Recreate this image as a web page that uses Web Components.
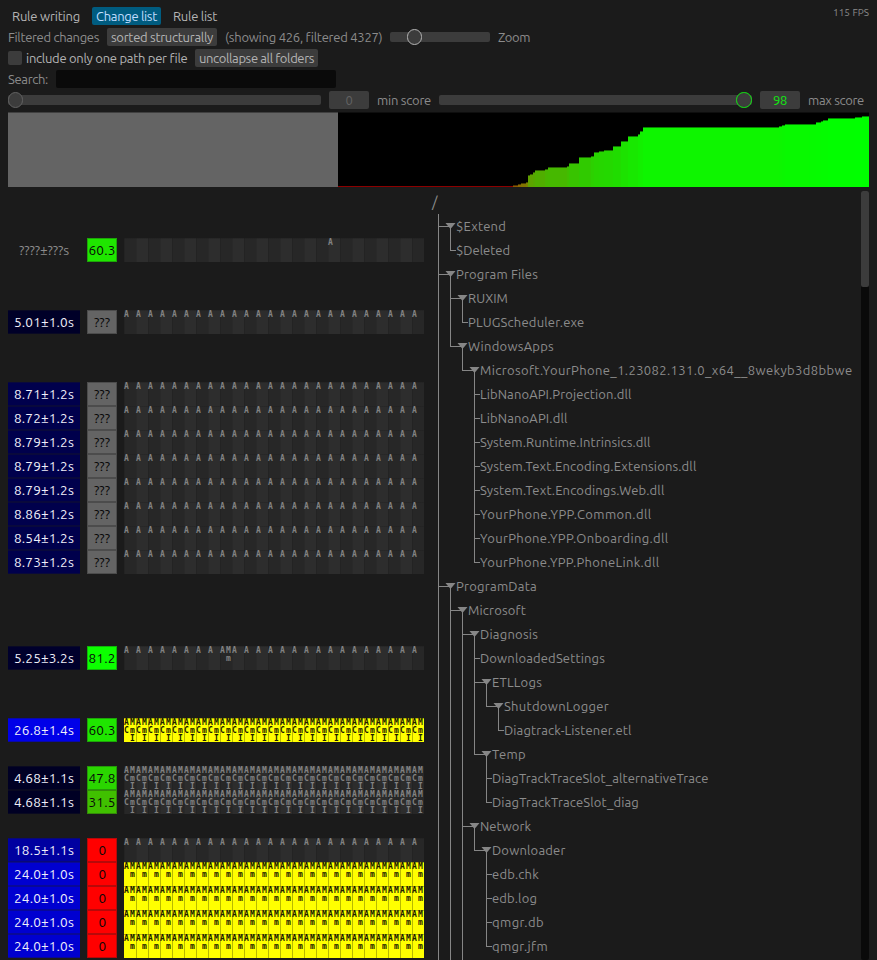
<!DOCTYPE html>
<html lang="en"><head><meta charset="utf-8"><title>Change list</title>
<style>
html,body{margin:0;height:960px;overflow:hidden;background:#1b1b1b}
body{font:13px/18px Ubuntu,"Noto Sans",sans-serif;color:#8c8c8c}
</style></head><body><change-app></change-app>
<script>
const define=(name,cls)=>customElements.define(name,cls);
const root=(el,html)=>{const r=el.shadowRoot||el.attachShadow({mode:'open'});r.innerHTML=html;return r};

/* Text whose tracking is adjusted to occupy a given advance width. */
define('fit-text',class extends HTMLElement{
  connectedCallback(){
    const r=root(this,`<style>:host{display:block;white-space:pre;flex:none}span{display:inline-block}</style><span><slot></slot></span>`);
    const w=+this.getAttribute('w');this.style.width=w+'px';
    const s=r.querySelector('span'),n=this.textContent.length;
    if(n)s.style.letterSpacing=((w-s.getBoundingClientRect().width)/n)+'px';
  }
});
define('ui-button',class extends HTMLElement{
  connectedCallback(){root(this,`<style>:host{display:flex;align-items:center;justify-content:center;box-sizing:border-box;height:18px;border-radius:2px;background:#3c3c3c;color:#b4b4b4;flex:none}
  :host([kind=plain]){background:none}:host([kind=selected]){background:#005c80;color:#c0deff}:host([kind=value]){width:40px;color:#626262}:host([kind=max]){width:40px;color:#12e812}</style><slot></slot>`)}
});
define('ui-slider',class extends HTMLElement{
  connectedCallback(){root(this,`<style>:host{display:flex;align-items:center;flex:none;height:18px;width:${this.getAttribute('w')}px}
  .rail{height:10px;width:100%;border-radius:2px;background:#3c3c3c;display:flex;align-items:center}
  .knob{box-sizing:border-box;width:15.5px;height:15.5px;flex:none;border-radius:50%;background:#3c3c3c;border:1px solid ${this.getAttribute('c')};margin-left:${this.getAttribute('at')}px}</style><div class="rail"><div class="knob"></div></div>`)}
});
define('ui-check',class extends HTMLElement{
  connectedCallback(){root(this,`<style>:host{display:block;width:14px;height:14px;border-radius:2px;background:#3c3c3c;flex:none}</style>`)}
});
define('score-histogram',class extends HTMLElement{
  connectedCallback(){
    const steps=[[338,186,'#8c0000'],[513,185,'#8c5a00'],[518,184,'#8a6800'],[521,183,'#827400'],[526,182,'#7a8000'],[528,175,'#60a000'],[530,174,'#5ca400'],[533,172,'#56a800'],[535,170,'#50ae00'],[545,169,'#48b600'],[548,167,'#46b800'],[567,166,'#40be00'],[569,163,'#38c400'],[579,157,'#30ca00'],[591,156,'#2cd000'],[594,152,'#28d400'],[599,151,'#26d600'],[604,150,'#24d800'],[613,146,'#20dc00'],[621,141,'#1ce200'],[628,136,'#18e800'],[638,134,'#14ee00'],[640,131,'#12f000'],[643,127,'#0ef500'],[779,126,'#0cf600'],[782,125,'#0af700'],[785,124,'#08f900'],[809,124,'#06fa00'],[816,122,'#05fb00'],[821,121,'#04fc00'],[823,120,'#04fc00'],[828,118,'#02fe00'],[855,117,'#01ff00'],[862,116,'#00ff00'],[869]];
    let b='';for(let i=0;i<steps.length-1;i++){const [x,y,c]=steps[i],w=steps[i+1][0]-x;b+=`<rect x="${x-8}" y="${y-112}" width="${w}" height="${187-y}" fill="${c}"/>`+(y<186?`<rect x="${x-8}" y="${y-112}" width="${w}" height="1" fill="#000" opacity=".45"/>`:'')}
    root(this,`<style>:host{display:block;width:861px;height:75px}svg{display:block}</style><svg width="861" height="75" shape-rendering="crispEdges"><rect width="861" height="75" fill="#000"/><rect width="330" height="75" fill="#646464"/><rect width="861" height="1" fill="#1b1b1b" opacity=".5"/>${b}</svg>`)
  }
});

/* Stats shown beside a path: duration, score, and the per-run event marks. */
define('change-stats',class extends HTMLElement{
  connectedCallback(){
    const d=this.data;if(!d){root(this,'<style>:host{display:block;height:24px}</style>');return}
    const [time,tc,score,sc,kind]=d,yellow=kind==='full'&&tc!=='#000024'||kind==='am';
    const rep=s=>s.repeat(25);
    const lines={a:[rep('A ')],one:[' '.repeat(34)+'A'],mix:['A '.repeat(8)+'AM'+'A '.repeat(16),' '.repeat(17)+'m'],full:[rep('AM'),rep('Cm'),rep(' I')],am:[rep('AM'),rep(' m')]}[kind];
    const tw=time[0]==='?'?50:60,sw=score==='0'?7:score==='???'?16:27;
    root(this,`<style>:host{display:flex;gap:8px;height:24px}
    .t,.s{height:24px;box-sizing:border-box;display:flex;align-items:center;justify-content:center;border:solid rgba(27,27,27,.32);border-width:1px 0}
    .t{width:72px;background:${tc};color:${tc==='transparent'?'#8c8c8c':'#f0f0fa'};${tc==='transparent'?'border:0':''}}
    .s{width:30px;background:${sc};color:#080808;border-width:1px;margin:0 -1px}
    fit-text{font-size:13.6px;line-height:19px}
    .m{width:300px;height:24px;font:bold 8px/8px "DejaVu Sans Mono",monospace;letter-spacing:1.184px;white-space:pre;color:${yellow?'#1c1c00':'#828282'};
    background:linear-gradient(rgba(27,27,27,.3) 1px,transparent 1px),${yellow?'linear-gradient(#ff0,#ff0) 0 0/1px 24px no-repeat,repeating-linear-gradient(90deg,#b9b900 0 1px,#ffff00 1px 12px)':'repeating-linear-gradient(90deg,#232323 0 1px,#272727 1px 12px,#292929 12px 13px,#2d2d2d 13px 24px)'};padding-top:1px;box-sizing:border-box}</style>
    <div class="t"><fit-text w="${tw}">${time}</fit-text></div><div class="s"><fit-text w="${sw}">${score}</fit-text></div><div class="m">${lines.map(l=>`<div>${l}</div>`).join('')}</div>`)
  }
});

/* One tree row: ancestor guides, connector, optional fold arrow, label. */
define('tree-row',class extends HTMLElement{
  connectedCallback(){
    const {depth:p,folder,label,w,open,last}=this.data;
    let g='';
    const line=(x,y,w,h)=>`<rect x="${x}" y="${y}" width="${w}" height="${h}"/>`;
    for(let c=0;c<p;c++)if(open[c])g+=line(12*c,0,1,24);
    g+=line(12*p,0,1,last?13:24);
    g+=line(12*p,12,folder?12:6,1);
    if(folder)g+=line(12*p+12,13,1,11)+`<path shape-rendering="auto" d="M${12*p+7.5} 9h10l-5 6z"/>`;
    const gw=12*p+(folder?18:6);
    root(this,`<style>:host{display:flex;height:24px;align-items:center}svg{flex:none;fill:#868686}</style><svg width="${gw}" height="24" shape-rendering="crispEdges">${g}</svg><fit-text w="${w}">${label}</fit-text>`)
  }
});
define('change-app',class extends HTMLElement{
  connectedCallback(){
    const r=root(this,`<style>:host{display:block;width:877px;height:960px;overflow:hidden}
    header{padding:7px 8px 0;display:flex;flex-direction:column;gap:3px}
    .row{display:flex;height:18px;align-items:center}
    .fps{margin-left:auto;font-size:10px;line-height:12px;margin-top:-6px}
    .box{width:280px;height:18px;background:#0a0a0a;border-radius:2px}
    .light{color:#b4b4b4}
    score-histogram{margin:3px 8px 3px}
    main{display:flex;padding:0 8px;height:770px;overflow:hidden}
    .stats{width:416px;padding-top:24px;flex:none}
    .tree{width:431px;margin-left:14px;flex:none}
    .root{height:24px;display:flex;align-items:center;margin-left:-6px}
    .root fit-text{font-size:15px}
    .bar{width:8px;margin-left:-8px;height:769px;margin-top:1px;background:#0a0a0a;border-radius:2px;flex:none}
    .thumb{height:96px;background:#3c3c3c;border-radius:2px}
    </style>
    <header>
     <div class="row"><ui-button kind="plain" style="width:76px"><fit-text w="68">Rule writing</fit-text></ui-button><ui-button kind="selected" style="width:69px;margin-left:8px"><fit-text w="61">Change list</fit-text></ui-button><ui-button kind="plain" style="width:52px;margin-left:8px"><fit-text w="44">Rule list</fit-text></ui-button><fit-text class="fps" w="36">115 FPS</fit-text></div>
     <div class="row"><fit-text w="91">Filtered changes</fit-text><ui-button style="width:110px;margin-left:8px"><fit-text w="102">sorted structurally</fit-text></ui-button><fit-text w="157" style="margin-left:8px">(showing 426, filtered 4327)</fit-text><ui-slider w="100" at="16.5" c="#b4b4b4" style="margin-left:8px"></ui-slider><fit-text w="32" style="margin-left:8px">Zoom</fit-text></div>
     <div class="row"><ui-check></ui-check><fit-text class="light" w="161" style="margin-left:4px">include only one path per file</fit-text><ui-button style="width:123px;margin-left:8px"><fit-text w="115">uncollapse all folders</fit-text></ui-button></div>
     <div class="row"><fit-text w="40">Search:</fit-text><div class="box" style="margin-left:8px"></div></div>
     <div class="row"><ui-slider w="313" at="-.5" c="#626262"></ui-slider><ui-button kind="value" style="margin-left:8px"><fit-text w="7">0</fit-text></ui-button><fit-text w="54" style="margin-left:8px">min score</fit-text><ui-slider w="313" at="297" c="#12e812" style="margin-left:8px"></ui-slider><ui-button kind="max" style="margin-left:8px"><fit-text w="14">98</fit-text></ui-button><fit-text w="56" style="margin-left:8px">max score</fit-text></div>
    </header>
    <score-histogram></score-histogram>
    <main><div class="stats"></div><div class="tree"><div class="root"><fit-text w="6">/</fit-text></div></div><div class="bar"><div class="thumb"></div></div></main>`);
    const tree=[[0,1,'$Extend',50],[1,0,'$Deleted',54],[0,1,'Program Files',82],[1,1,'RUXIM',40],[2,0,'PLUGScheduler.exe',116.5],[1,1,'WindowsApps',86],[2,1,'Microsoft.YourPhone_1.23082.131.0_x64__8wekyb3d8bbwe',372.5],
     [3,0,'LibNanoAPI.Projection.dll',151.5],[3,0,'LibNanoAPI.dll',87.5],[3,0,'System.Runtime.Intrinsics.dll',170.5],[3,0,'System.Text.Encoding.Extensions.dll',216.5],[3,0,'System.Text.Encodings.Web.dll',184.5],[3,0,'YourPhone.YPP.Common.dll',171.5],[3,0,'YourPhone.YPP.Onboarding.dll',188.5],[3,0,'YourPhone.YPP.PhoneLink.dll',179.5],
     [0,1,'ProgramData',81],[1,1,'Microsoft',58],[2,1,'Diagnosis',58],[3,0,'DownloadedSettings',125],[3,1,'ETLLogs',50],[4,1,'ShutdownLogger',105],[5,0,'Diagtrack-Listener.etl',127.5],[3,1,'Temp',34],[4,0,'DiagTrackTraceSlot_alternativeTrace',216.5],[4,0,'DiagTrackTraceSlot_diag',147],[2,1,'Network',51],[3,1,'Downloader',73.5],[4,0,'edb.chk',47],[4,0,'edb.log',45],[4,0,'qmgr.db',52],[4,0,'qmgr.jfm',56],[2,0,'',0]];
    /* Levels 0 to 2 have more siblings below the visible window. */
    const more=(i,d)=>{for(let j=i+1;j<tree.length;j++){if(tree[j][0]===d)return true;if(tree[j][0]<d)return false}return d<=2};
    const grey='#646464',red='#ff0000';
    const stats={1:['????±???s','transparent','60.3','#1fe600','one'],4:['5.01±1.0s','#000028','???',grey,'a'],
     18:['5.25±3.2s','#00002c','81.2','#0cff00','mix'],21:['26.8±1.4s','#0000e8','60.3','#1fe600','full'],
     23:['4.68±1.1s','#000024','47.8','#2ad600','full'],24:['4.68±1.1s','#000024','31.5','#40c000','full'],26:['18.5±1.1s','#0000a0','0',red,'a']};
    ['8.71','8.72','8.79','8.79','8.79','8.86','8.54','8.73'].forEach((t,i)=>stats[7+i]=[t+'±1.2s','#00004c','???',grey,'a']);
    for(let i=27;i<31;i++)stats[i]=['24.0±1.0s','#0000d0','0',red,'am'];
    const S=r.querySelector('.stats'),T=r.querySelector('.tree');
    tree.forEach(([depth,folder,label,w],i)=>{
      const s=document.createElement('change-stats');s.data=stats[i];S.append(s);
      const t=document.createElement('tree-row'),open=[];for(let c=0;c<depth;c++)open.push(more(i,c));
      t.data={depth,folder,label,w,open,last:!more(i,depth)};T.append(t);
    });
  }
});
</script></body></html>
